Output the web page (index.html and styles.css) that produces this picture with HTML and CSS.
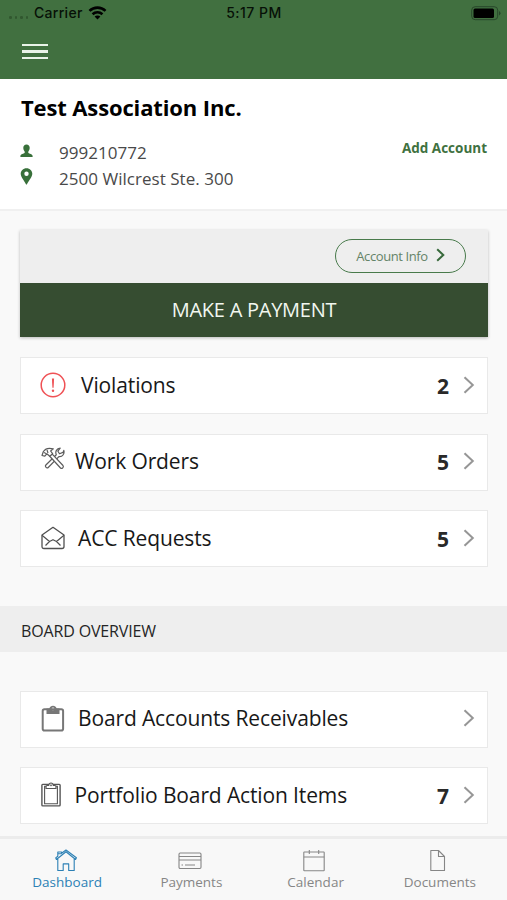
FILE: index.html
```html
<!DOCTYPE html>
<html lang="en">
<head>
<meta charset="utf-8">
<title>Dashboard</title>
<link rel="stylesheet" href="styles.css">
</head>
<body>
<div class="app">
  <header class="topbar">
    <div class="status">
      <div class="carrier">
        <span class="signal"><i></i><i></i><i></i><i></i></span>
        <span class="carrier-name">Carrier</span>
        <svg class="wifi" viewBox="0 0 20 15"><g fill="none" stroke="#000" stroke-width="2.8"><path d="M1.4 5.2C6.2.6 13.800.6 18.600 5.200"/><path d="M4.700 8.800c3-2.800 7.600-2.800 10.600 0"/></g><path d="M10 14.500l-3.100-3.200c1.700-1.500 4.500-1.500 6.200 0z"/></svg>
      </div>
      <span class="time">5:17 PM</span>
      <svg class="battery" viewBox="0 0 30 15"><rect x=".7" y=".7" width="26" height="13" rx="3.500" fill="none" stroke="#28472a"/><rect x="2.500" y="2.500" width="20.500" height="9.400" rx="1.500"/><path d="M28 5v4.500q1.500-.6 1.500-2.200T28 5z" fill="#28472a"/></svg>
    </div>
    <button class="menu" aria-label="Menu"><i></i><i></i><i></i></button>
  </header>

  <section class="account">
    <h1>Test Association Inc.</h1>
    <div class="account-body">
      <div class="details">
        <div class="detail">
          <svg viewBox="0 0 13 14"><path d="M6.500.5c2 0 3.200 1.300 3.200 3.200 0 1.500-.5 2.600-1.200 3.500-.4.600-.4 1.300 0 1.900.7 1 3.800 1 4.100 2.700v1.200H.4v-1.200c.3-1.700 3.400-1.700 4.100-2.700.4-.6.4-1.300 0-1.900-.7-.9-1.200-2-1.200-3.500C3.300 1.800 4.500.5 6.500.5z"/></svg>
          <span>999210772</span>
        </div>
        <div class="detail">
          <svg class="pin" viewBox="0 0 13 17"><path fill-rule="evenodd" d="M6.500.2c3.400 0 5.800 2.500 5.800 5.600 0 3-2.900 5.800-5.500 10.700h-.7C3.600 11.600.7 8.800.7 5.800.7 2.700 3.100.2 6.500.2zm0 3.400a2.200 2.200 0 100 4.400 2.200 2.200 0 000-4.400z"/></svg>
          <span>2500 Wilcrest Ste. 300</span>
        </div>
      </div>
      <a class="add">Add Account</a>
    </div>
  </section>

  <main>
    <section class="pay-card">
      <div class="pay-top">
        <button class="info"><span>Account Info</span><svg viewBox="0 0 9 14"><path d="M1.200 1.200L7.300 7l-6.100 5.800" fill="none" stroke="#38693b" stroke-width="2"/></svg></button>
      </div>
      <button class="pay">MAKE A PAYMENT</button>
    </section>

    <div class="row violations">
      <svg class="icon" viewBox="0 0 26 26"><circle cx="13" cy="13" r="11.800" fill="none" stroke="#ef5155" stroke-width="1.500"/><path d="M11.900 6.500h2.200l-.5 9.300h-1.200z" fill="#ef5155"/><circle cx="13" cy="18.700" r="1.200" fill="#ef5155"/></svg>
      <span class="label">Violations</span><b>2</b>
      <svg class="chev" viewBox="0 0 12 18"><path d="M1.500 1.200L9.800 9l-8.300 7.800"/></svg>
    </div>
    <div class="row orders">
      <svg class="icon" viewBox="0 0 24 24" fill="#fff" stroke="#5c5c5c" stroke-width="1.200" stroke-linejoin="round"><path d="M15.300 7.700c-1.400-3 .4-6.300 3.900-6.500l-2.300 3 1.600 2.500 3.500-1.300.8-2c1 3.400-1.400 6.800-4.900 6.200L7.200 20.500c-1.200 1.300-3.700-.9-2.300-2.500z"/><path d="M8.500 9l2.500-2.200 11 11.700c1.200 1.500-1 3.800-2.500 2.500z"/><path d="M1 8.500l1.400-4C4.300 1.700 8 .6 12.300 1.900L9.600 4l2 2.700-2.800 2.600-3-2.500-2 2.400z"/><path d="M3 5.500l2.500 1.300M6 3l1 3" fill="none"/></svg>
      <span class="label">Work Orders</span><b>5</b>
      <svg class="chev" viewBox="0 0 12 18"><path d="M1.500 1.200L9.800 9l-8.300 7.800"/></svg>
    </div>
    <div class="row requests">
      <svg class="icon" viewBox="0 0 24 24" fill="none" stroke="#505050" stroke-width="1.300" stroke-linejoin="round"><path d="M1 9L12 1.300 23 9v11.500q0 2-2 2H3q-2 0-2-2z"/><path d="M1 9.200l7.500 6.300L12 13.700l3.500 1.800L23 9.200M4.500 19.500l4-4M19.500 19.500l-4-4" stroke-width="1.200"/></svg>
      <span class="label">ACC Requests</span><b>5</b>
      <svg class="chev" viewBox="0 0 12 18"><path d="M1.500 1.200L9.800 9l-8.300 7.800"/></svg>
    </div>

    <h2>BOARD OVERVIEW</h2>

    <div class="row receivables">
      <svg class="icon" viewBox="0 0 24 27"><rect x="1.700" y="4.200" width="20.400" height="21.300" rx="1.800" fill="none" stroke="#777" stroke-width="2"/><path fill="#777" fill-rule="evenodd" d="M5.500 3.500h2.800C9 1.800 10.200.8 12 .8s3 .9 3.700 2.700h2.800v5.600h-13zM12 2.500a1.400 1.400 0 100 2.800 1.400 1.400 0 000-2.800z"/></svg>
      <span class="label">Board Accounts Receivables</span>
      <svg class="chev" viewBox="0 0 12 18"><path d="M1.500 1.200L9.800 9l-8.300 7.800"/></svg>
    </div>
    <div class="row actions">
      <svg class="icon" viewBox="0 0 20 25" fill="none" stroke="#565656"><rect x=".9" y="2.400" width="18.200" height="21.500" rx=".8" stroke-width="1.400"/><path d="M5.500 4.200H3.600v17.500h12.800V4.200h-1.900" stroke-width="1.100"/><path d="M5 6.500V4.500q0-1 1-1h1.600Q8.100 1 10 1t2.400 2.500H14q1 0 1 1v2z" fill="#fff" stroke-width="1.200"/><circle cx="10" cy="3.300" r=".6"/></svg>
      <span class="label">Portfolio Board Action Items</span><b>7</b>
      <svg class="chev" viewBox="0 0 12 18"><path d="M1.500 1.200L9.800 9l-8.300 7.800"/></svg>
    </div>
  </main>

  <nav class="tabs">
    <a class="tab active">
      <svg viewBox="0 0 24 24"><path d="M2.400 10.500L12 2.800l9.600 7.700.8-1.800L12 1 7.500 4.300V3H3.800v4.300L1.700 8.900zM3.800 10v11.500h5.400v-6.600h5.500v6.600h5.500V10M4 4.800h3.300"/></svg>
      <span>Dashboard</span>
    </a>
    <a class="tab">
      <svg viewBox="0 0 24 24"><rect x="1" y="4" width="22" height="15.500" rx="1.200"/><path d="M1 7.500h22M1 11h22M3.500 16h1.500M7 16h10"/></svg>
      <span>Payments</span>
    </a>
    <a class="tab">
      <svg viewBox="0 0 24 24"><rect x="1.800" y="3" width="20.400" height="18.800" rx=".6"/><path d="M1.800 8h20.400M7.300 1v4M16.700 1v4"/></svg>
      <span>Calendar</span>
    </a>
    <a class="tab">
      <svg viewBox="0 0 24 24"><path d="M4.800 1.500h7.700l6 6v14H4.800zM12.500 1.500v6h6"/></svg>
      <span>Documents</span>
    </a>
  </nav>
</div>
</body>
</html>
```
FILE: styles.css
```css
* { box-sizing: border-box; }
body { margin: 0; font-family: "Open Sans", "Noto Sans", sans-serif; background: #f9f9f9; color: #1c1c1c; }
button { font: inherit; border: 0; padding: 0; background: none; }
svg { display: block; flex: none; }
.app { height: 900px; overflow: hidden; display: flex; flex-direction: column; }

.topbar { height: 79px; flex: none; background: #417040; }
.status { height: 26px; padding: 0 7px 0 8px; display: grid; grid-template-columns: 1fr auto 1fr; align-items: center; font: 500 14px/26px Inter, sans-serif; color: #071007; }
.carrier { display: flex; align-items: center; }
.signal { display: flex; gap: 3px; margin: 9px 6px 0 1px; }
.signal i { width: 2.500px; height: 2.500px; border-radius: 50%; background: #31572f; }
.carrier-name { letter-spacing: .3px; }
.wifi { width: 19px; height: 14px; margin-left: 5px; }
.time { letter-spacing: .5px; }
.battery { width: 30px; height: 15px; justify-self: end; position: relative; left: 1px; }
.menu { display: flex; flex-direction: column; gap: 4px; width: 26px; margin: 17.500px 0 0 22px; }
.menu i { height: 2.500px; background: #e9f3e8; }

.account { height: 132px; flex: none; padding: 13px 20px 0 21px; background: #fff; border-bottom: 2px solid #f0f0f0; }
h1 { margin: 0; font-size: 22px; line-height: 30px; font-weight: 700; letter-spacing: -.13px; color: #000; }
.account-body { display: flex; justify-content: space-between; padding-top: 17px; }
.detail { display: flex; align-items: center; height: 26px; font-size: 17px; letter-spacing: .03px; color: #494949; }
.detail svg { width: 13px; height: 14px; margin-right: 26px; margin-left: -1px; fill: #38703a; position: relative; top: -1px; }
.detail .pin { height: 17px; top: -2px; }
.add { font-size: 13.500px; line-height: 18px; font-weight: 700; color: #40713f; }

main { flex: 1; min-height: 0; padding: 19px 19px 0 20px; }
.pay-card { height: 107px; margin-bottom: 20px; box-shadow: 0 1px 3px rgba(0,0,0,.25); }
.pay-top { height: 53px; padding: 9px 22px 0 0; display: flex; justify-content: flex-end; background: #eee; }
.info { width: 131px; height: 34px; border: 1.500px solid #487a4b; border-radius: 17px; display: flex; align-items: center; justify-content: center; gap: 8px; font-size: 13px; letter-spacing: -.4px; color: #648368; }
.info svg { width: 9px; height: 14px; position: relative; top: -1px; }
.pay { display: block; width: 100%; height: 54px; padding-bottom: 2px; background: #364d31; color: #f1f7ef; font-size: 20px; letter-spacing: -.25px; }

.row { height: 57px; margin-bottom: 19.500px; padding: 0 12px 2px 20px; display: flex; align-items: center; background: #fff; border: 1px solid #e9e9e9; font-size: 21px; line-height: 30px; }
.row b { margin-left: auto; font-size: 21px; color: #292929; position: relative; top: 1px; }
.label { color: #181818; letter-spacing: -.13px; }
.chev { width: 12px; height: 18px; margin-left: 14px; fill: none; stroke: #969696; stroke-width: 2; }
.receivables .chev { margin-left: auto; }
.icon { width: 24px; height: 24px; margin-right: 13px; }
.violations .icon { width: 26px; height: 26px; margin: 0 15px 0 -1px; }
.orders .icon { margin: -5px 10px 0 0; }
.receivables .icon { height: 27px; }
.actions .icon { width: 20px; height: 25px; margin: 0 14px 0 -.500px; }

h2 { height: 46px; margin: 39px -19px 38.500px -20px; padding-left: 21px; background: #eee; font-size: 16px; line-height: 50px; letter-spacing: -.15px; font-weight: 400; color: #252525; }

.tabs { height: 64px; flex: none; padding: 0 5px; display: flex; background: #f8f8f8; border-top: 3px solid #ececec; }
.tab { flex: 1; display: flex; flex-direction: column; align-items: center; padding-top: 10px; font-size: 13.500px; line-height: 19px; color: #868686; }
.tab svg { width: 24px; height: 24px; fill: none; stroke: currentColor; stroke-width: 1.100; stroke-linejoin: round; margin-left: -3px; }
.active { color: #2c80b5; }
```
